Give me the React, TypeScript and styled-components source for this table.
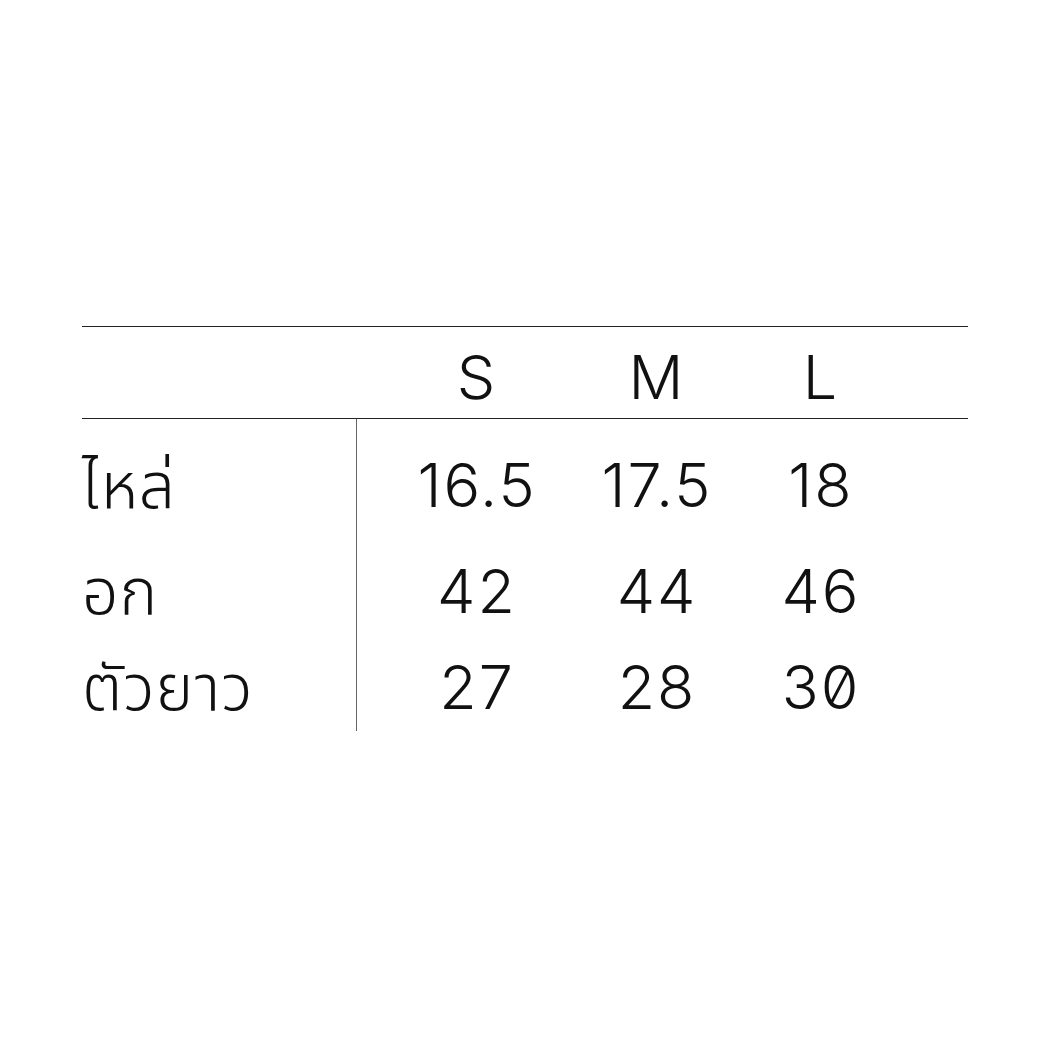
import React from 'react';
import styled, { createGlobalStyle } from 'styled-components';

const GlobalStyle = createGlobalStyle`
      html, body {
            margin: 0;
            padding: 0;
            background: #fff;
      }
`;

type Row = { label: string; values: string[]; spacing: number };

const sizes = ['S', 'M', 'L'];

const rows: Row[] = [
      { label: 'ไหล่', values: ['16.5', '17.5', '18'], spacing: 0 },
      { label: 'อก', values: ['42', '44', '46'], spacing: 46 },
      { label: 'ตัวยาว', values: ['27', '28', '30'], spacing: 36 },
];

const App: React.FC = () => {
      return (
            <Page>
                  <GlobalStyle />
                  <Chart>
                        <HeaderRow>
                              <LabelSpacer />
                              <ValueGrid>
                                    {sizes.map((s) => (
                                          <Cell key={s}>{s}</Cell>
                                    ))}
                              </ValueGrid>
                        </HeaderRow>
                        <Body>
                              <LabelColumn>
                                    {rows.map((r) => (
                                          <Label key={r.label} $spacing={r.spacing}>
                                                {r.label}
                                          </Label>
                                    ))}
                              </LabelColumn>
                              <ValueColumn>
                                    {rows.map((r) => (
                                          <ValueGrid key={r.label} $spacing={r.spacing}>
                                                {r.values.map((v, i) => (
                                                      <Cell key={i}>{v}</Cell>
                                                ))}
                                          </ValueGrid>
                                    ))}
                              </ValueColumn>
                        </Body>
                  </Chart>
            </Page>
      );
};

export default App;

const Page = styled.div`
      width: 1040px;
      height: 1040px;
      box-sizing: border-box;
      padding: 326px 72px 0 82px;
      font-family: Inter, 'Noto Sans Thai', 'Noto Sans', 'DejaVu Sans', sans-serif;
      font-weight: 300;
      font-size: 61px;
      line-height: 60px;
      color: #111;
      font-feature-settings: 'zero' 1;
`;

const Chart = styled.div`
      width: 886px;
      border-top: 1px solid #222;
`;

const HeaderRow = styled.div`
      display: flex;
      height: 92px;
      box-sizing: border-box;
      padding-top: 20px;
      border-bottom: 1px solid #222;
`;

const LabelSpacer = styled.div`
      width: 275px;
`;

const ValueGrid = styled.div<{ $spacing?: number }>`
      display: grid;
      grid-template-columns: 238px 122px 206px;
      margin-top: ${(p) => p.$spacing ?? 0}px;
`;

const Cell = styled.div`
      text-align: center;
      white-space: nowrap;
      letter-spacing: 2px;
      padding-left: 2px;
`;

const Body = styled.div`
      display: flex;
`;

const LabelColumn = styled.div`
      width: 275px;
      box-sizing: border-box;
      border-right: 1px solid #666;
      padding: 36px 0 14px;
      display: flex;
      flex-direction: column;
`;

const Label = styled.div<{ $spacing: number }>`
      margin-top: ${(p) => p.$spacing}px;
      white-space: nowrap;
      font-size: 64px;
      letter-spacing: 1px;
`;

const ValueColumn = styled.div`
      padding: 36px 0 14px;
      display: flex;
      flex-direction: column;
`;
